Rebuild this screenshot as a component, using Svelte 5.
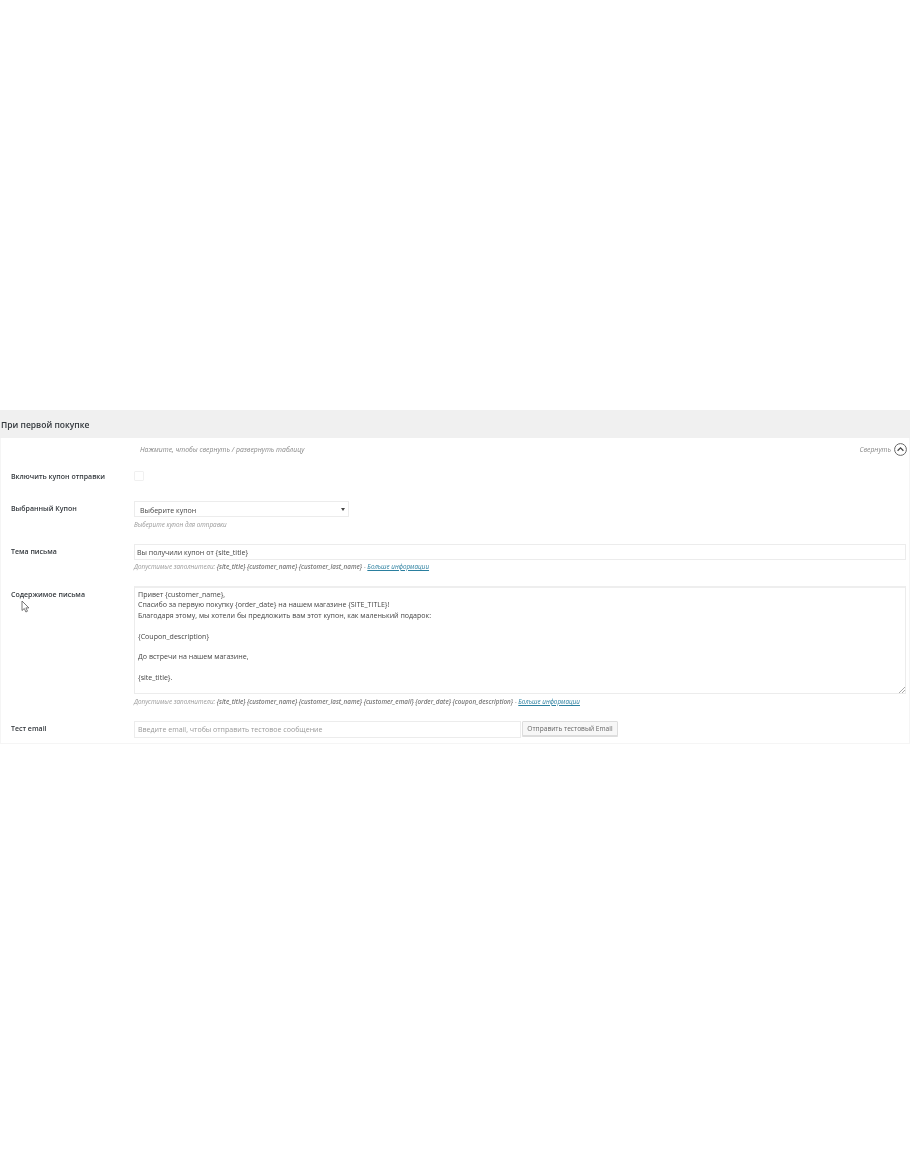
<script>
  const placeholders = '{site_title} {customer_name} {customer_last_name}';
  const allPlaceholders = '{site_title} {customer_name} {customer_last_name} {customer_email} {order_date} {coupon_description}';
  const body = `Привет {customer_name},
Спасибо за первую покупку {order_date} на нашем магазине {SITE_TITLE}!
Благодаря этому, мы хотели бы предложить вам этот купон, как маленький подарок:

{Coupon_description}

До встречи на нашем магазине,

{site_title}.`;
</script>

<main class="page">
  <h2 class="heading">При первой покупке</h2>

  <section class="panel">
    <div class="toggle-row">
      <em class="toggle-hint">Нажмите, чтобы свернуть / развернуть таблицу</em>
      <span class="collapse">
        <em>Свернуть</em>
        <svg width="13" height="13" viewBox="0 0 13 13" aria-hidden="true">
          <circle cx="6.5" cy="6.5" r="5.9" fill="none" stroke="#666" />
          <path d="M3.6 7.7 6.5 4.9 9.4 7.7" fill="none" stroke="#444" stroke-width="1.3" />
        </svg>
      </span>
    </div>

    <div class="row row-check">
      <div class="label">Включить купон отправки</div>
      <div class="field"><span class="checkbox"></span></div>
    </div>

    <div class="row row-select">
      <div class="label">Выбранный Купон</div>
      <div class="field">
        <div class="select">
          <span>Выберите купон</span>
          <i class="arrow"></i>
        </div>
        <p class="desc">Выберите купон для отправки</p>
      </div>
    </div>

    <div class="row row-subject">
      <div class="label">Тема письма</div>
      <div class="field">
        <div class="input">Вы получили купон от {'{site_title}'}</div>
        <p class="desc">Допустимые заполнители: <b>{placeholders}</b> - <a href="#more">Больше информации</a></p>
      </div>
    </div>

    <div class="row row-body">
      <div class="label">
        Содержимое письма
        <svg class="cursor" width="9" height="13" viewBox="0 0 9 13" aria-hidden="true">
          <path d="M1 1v9.5l2.3-2 1.6 3.5 1.6-.8-1.6-3.3h3z" fill="#fff" stroke="#555" stroke-width=".8" />
        </svg>
      </div>
      <div class="field">
        <div class="textarea">
          {body}
          <svg class="grip" width="7" height="7" viewBox="0 0 7 7" aria-hidden="true">
            <path d="M7 1 1 7M7 4 4 7" stroke="#aaa" />
          </svg>
        </div>
        <p class="desc">Допустимые заполнители: <b>{allPlaceholders}</b> - <a href="#more">Больше информации</a></p>
      </div>
    </div>

    <div class="row row-test">
      <div class="label">Тест email</div>
      <div class="field test-field">
        <div class="input test-input">Введите email, чтобы отправить тестовое сообщение</div>
        <button type="button">Отправить тестовый Email</button>
      </div>
    </div>
  </section>
</main>

<style>
  :global(body) {
    background: #fff;
  }

  .page {
    padding-top: 410px;
    font-family: "Open Sans", "Noto Sans", sans-serif;
    font-size: 7px;
    color: #444;
    filter: blur(0.35px);
  }

  .heading {
    margin: 0;
    height: 28px;
    padding-left: 1px;
    background: #f0f0f0;
    color: #32373c;
    font-size: 8.5px;
    font-weight: 600;
    line-height: 30px;
  }

  .panel {
    height: 306px;
    box-sizing: border-box;
    border: 1px solid #f5f5f5;
    border-top: 0;
    padding-left: 10px;
    padding-right: 3px;
  }

  .toggle-row {
    display: flex;
    justify-content: space-between;
    align-items: center;
    height: 22px;
    padding-left: 129px;
    color: #888;
  }

  .toggle-hint {
    font-size: 6.8px;
  }

  .collapse {
    display: flex;
    align-items: center;
    gap: 3px;
    margin-right: -1px;
    font-size: 6.8px;
  }

  .row {
    display: grid;
    grid-template-columns: 123px 1fr;
  }

  .label {
    position: relative;
    color: #32373c;
    font-weight: 600;
    line-height: 11px;
  }

  .cursor {
    position: absolute;
    left: 10px;
    top: 14px;
  }

  .row-check {
    height: 41px;
    padding-top: 11px;
    box-sizing: border-box;
  }

  .row-select {
    height: 43px;
  }

  .row-select .label {
    padding-top: 2px;
  }

  .row-subject {
    height: 42px;
  }

  .row-subject .label {
    padding-top: 2px;
  }

  .row-subject .desc {
    margin-top: 2px;
  }

  .row-body {
    height: 135px;
  }

  .row-body .label {
    padding-top: 3px;
  }

  .row-test .label {
    padding-top: 2px;
  }

  .checkbox {
    display: block;
    width: 8px;
    height: 8px;
    border: 1px solid #f0f0f0;
    border-radius: 1px;
  }

  .select {
    display: flex;
    justify-content: space-between;
    align-items: center;
    box-sizing: border-box;
    width: 215px;
    height: 16px;
    padding: 1px 3px 0 5px;
    border: 1px solid #ececec;
    font-size: 7.05px;
    color: #444;
  }

  .arrow {
    width: 0;
    height: 0;
    border-left: 2px solid transparent;
    border-right: 2px solid transparent;
    border-top: 3px solid #444;
  }

  .input {
    box-sizing: border-box;
    height: 16px;
    padding: 0 2px;
    border: 1px solid #ececec;
    font-size: 7.05px;
    line-height: 14px;
    color: #444;
  }

  .desc {
    margin: 3px 0 0;
    font-size: 6.3px;
    font-style: italic;
    line-height: 9px;
    color: #999;
  }

  .desc b {
    font-weight: 600;
    color: #777;
  }

  .desc a {
    color: #2a7f9f;
    text-decoration: underline;
  }

  .textarea {
    position: relative;
    box-sizing: border-box;
    height: 108px;
    padding: 1px 3px;
    border: 1px solid #ececec;
    border-top: 2px solid #eee;
    font-size: 7.05px;
    line-height: 10.4px;
    white-space: pre-line;
    color: #444;
  }

  .grip {
    position: absolute;
    right: 0;
    bottom: 0;
  }

  .test-field {
    display: flex;
    gap: 1px;
  }

  .test-input {
    width: 387px;
    height: 17px;
    padding-left: 3px;
    line-height: 14px;
    color: #999;
  }

  button {
    width: 96px;
    height: 15px;
    padding: 0;
    border: 1px solid #ddd;
    border-radius: 1px;
    background: #f7f7f7;
    box-shadow: 0 1px 0 #ddd;
    font: inherit;
    font-size: 6.6px;
    color: #666;
    white-space: nowrap;
  }
</style>
